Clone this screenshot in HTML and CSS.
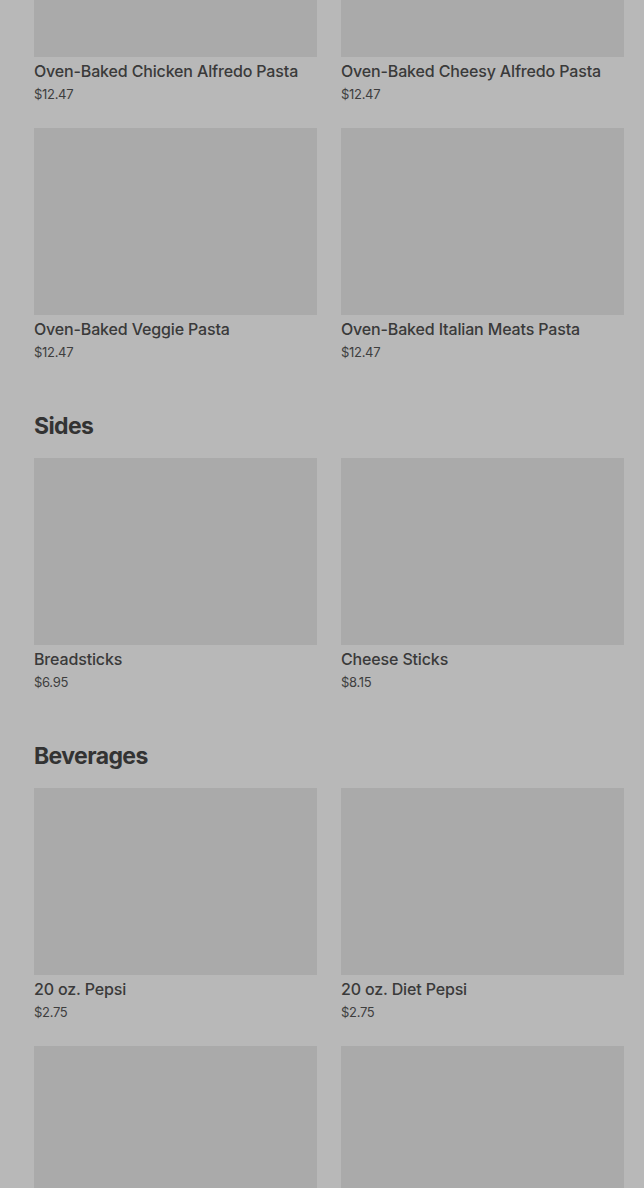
FILE: index.html
```html
<!DOCTYPE html>
<html lang="en">
<head>
<meta charset="utf-8">
<link rel="stylesheet" href="styles.css">
</head>
<body>
<main class="menu">
  <section class="section first">
    <div class="grid">
      <div class="item"><div class="thumb"></div><div class="name">Oven-Baked Chicken Alfredo Pasta</div><div class="price">$12.47</div></div>
      <div class="item"><div class="thumb"></div><div class="name">Oven-Baked Cheesy Alfredo Pasta</div><div class="price">$12.47</div></div>
      <div class="item"><div class="thumb"></div><div class="name">Oven-Baked Veggie Pasta</div><div class="price">$12.47</div></div>
      <div class="item"><div class="thumb"></div><div class="name">Oven-Baked Italian Meats Pasta</div><div class="price">$12.47</div></div>
    </div>
  </section>
  <section class="section">
    <h2 class="heading">Sides</h2>
    <div class="grid">
      <div class="item"><div class="thumb"></div><div class="name">Breadsticks</div><div class="price">$6.95</div></div>
      <div class="item"><div class="thumb"></div><div class="name">Cheese Sticks</div><div class="price">$8.15</div></div>
    </div>
  </section>
  <section class="section">
    <h2 class="heading">Beverages</h2>
    <div class="grid">
      <div class="item"><div class="thumb"></div><div class="name">20 oz. Pepsi</div><div class="price">$2.75</div></div>
      <div class="item"><div class="thumb"></div><div class="name">20 oz. Diet Pepsi</div><div class="price">$2.75</div></div>
      <div class="item"><div class="thumb"></div></div>
      <div class="item"><div class="thumb"></div></div>
    </div>
  </section>
</main>
</body>
</html>
```

FILE: styles.css
```css
html, body {
  margin: 0;
  padding: 0;
  background: #b8b8b8;
  overflow: hidden;
}
body {
  font-family: Inter, "Noto Sans", sans-serif;
  color: #383838;
}
.menu {
  padding: 0 20px 0 34px;
  display: flex;
  flex-direction: column;
  gap: 50px;
}
.section.first {
  margin-top: -130px;
}
.heading {
  margin: 0 0 16px;
  font-size: 23px;
  line-height: 32px;
  font-weight: 700;
  letter-spacing: -0.6px;
  color: #333333;
}
.grid {
  display: grid;
  grid-template-columns: 283px 283px;
  column-gap: 24px;
  row-gap: 26px;
}
.item {
  display: flex;
  flex-direction: column;
}
.thumb {
  height: 187px;
  background: #aaaaaa;
}
.name {
  margin-top: 4px;
  font-size: 16px;
  line-height: 20px;
  font-weight: 500;
  letter-spacing: -0.15px;
  color: #3a3a3a;
  white-space: nowrap;
}
.price {
  margin-top: 5px;
  font-size: 13px;
  line-height: 16px;
  color: #3e3e3e;
  letter-spacing: -0.3px;
}
```
